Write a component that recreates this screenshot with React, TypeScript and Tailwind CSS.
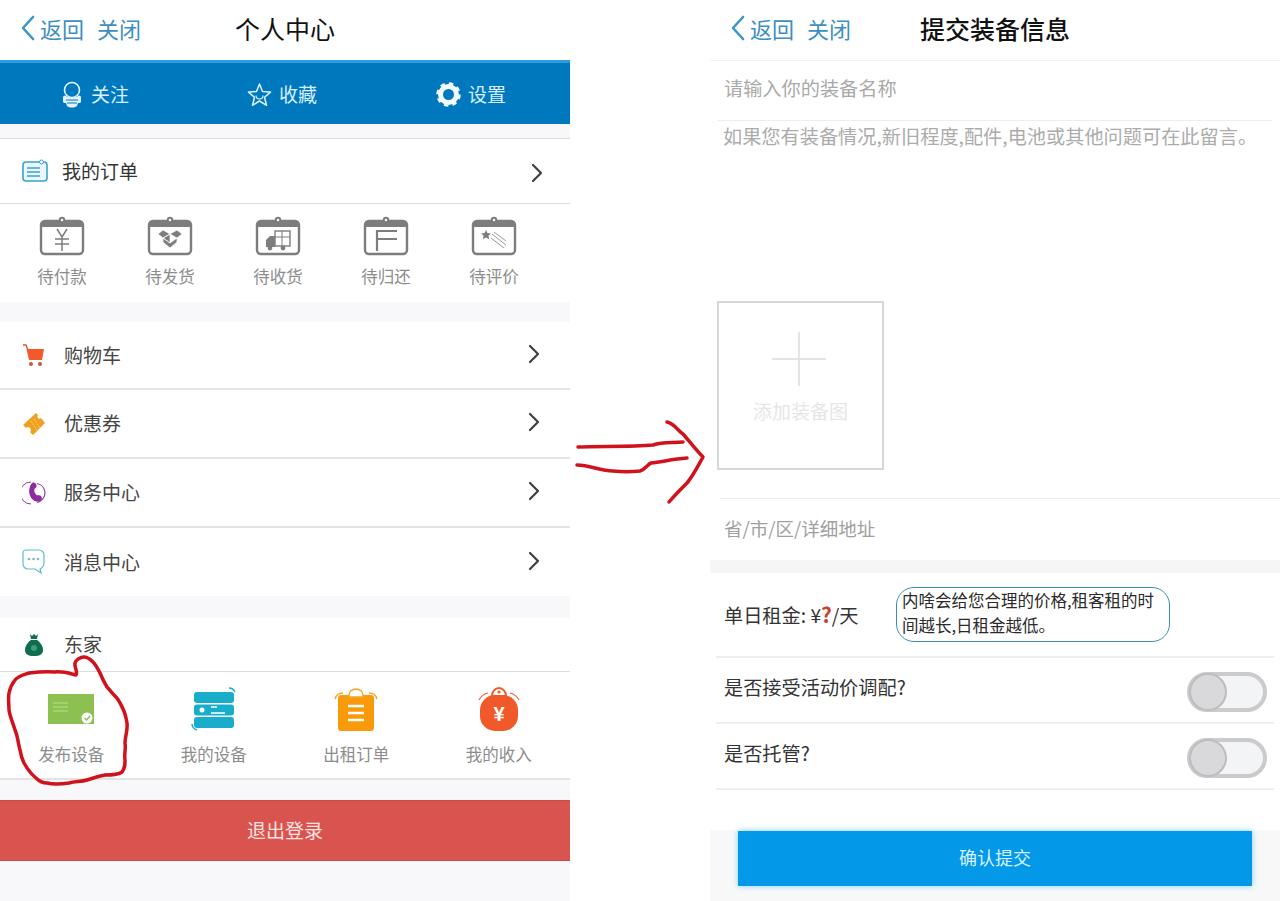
import type { ReactNode } from 'react';

function Chevron({ className = '' }: { className?: string }) {
  return (
    <svg width="14" height="20" viewBox="0 0 14 20" fill="none" className={className}>
      <path d="M3 2l8 8-8 8" stroke="#3f3f3f" strokeWidth="2.2" strokeLinecap="round" strokeLinejoin="round" />
    </svg>
  );
}

function NavBar({ title, bold }: { title: string; bold?: boolean }) {
  return (
    <header className="grid h-[60px] shrink-0 grid-cols-[1fr_auto_1fr] items-center px-[20px] pb-1">
      <div className="flex items-center text-[22px] text-[#3d8fbf]">
        <svg width="16" height="26" viewBox="0 0 16 26" fill="none" className="mr-[4px]">
          <path d="M13 2L3 13l10 11" stroke="#3d95c8" strokeWidth="2.6" strokeLinecap="round" strokeLinejoin="round" />
        </svg>
        <span>返回</span>
        <span className="ml-[13px]">关闭</span>
      </div>
      <h1 className={`text-[25px] leading-none text-[#111] ${bold ? 'font-medium' : ''}`}>{title}</h1>
      <div />
    </header>
  );
}

function OrderIcon({ children }: { children: ReactNode }) {
  return (
    <svg width="46" height="40" viewBox="0 0 46 40" fill="none">
      <rect x="2" y="5" width="42" height="33" rx="4" stroke="#7d7d7d" strokeWidth="2.4" fill="#fff" />
      <path d="M2 9a4 4 0 014-4h34a4 4 0 014 4v2H2z" fill="#7d7d7d" />
      <circle cx="23" cy="4" r="3.2" fill="#7d7d7d" />
      <circle cx="23" cy="4" r="1.2" fill="#fff" />
      {children}
    </svg>
  );
}

const orderTabs: { label: string; icon: ReactNode }[] = [
  {
    label: '待付款',
    icon: <path d="M18 13l5 8 5-8M16 23h14M16 28h14M23 21v14" stroke="#7d7d7d" strokeWidth="1.5" />,
  },
  {
    label: '待发货',
    icon: (
      <path
        d="M23 18l-7-4-5 4 5 4zM23 18l7-4 5 4-5 4-7-4-7 4 7 5zM23 27l7-5v4l-7 6-7-6v-4z"
        fill="#7d7d7d"
        stroke="#fff"
        strokeWidth="0.7"
      />
    ),
  },
  {
    label: '待收货',
    icon: (
      <>
        <rect x="20" y="15" width="15" height="15" stroke="#7d7d7d" strokeWidth="1.4" />
        <path d="M20 21h15M27 15v15" stroke="#7d7d7d" strokeWidth="1" />
        <path d="M11 31v-7l4-4h5v11z" fill="#7d7d7d" />
        <circle cx="15" cy="32" r="2.4" fill="#7d7d7d" />
        <circle cx="28" cy="32" r="2.4" fill="#7d7d7d" />
      </>
    ),
  },
  {
    label: '待归还',
    icon: <path d="M14 35V15h20M15 23h19" stroke="#7d7d7d" strokeWidth="2.2" />,
  },
  {
    label: '待评价',
    icon: (
      <>
        <path d="M15 14l1.5 3 3.500.4-2.500 2.300.7 3.500-3.200-1.700-3 1.700.6-3.500-2.400-2.300 3.400-.4z" fill="#7d7d7d" />
        <path d="M21 18l14 11M20 22l13 10M23 16l12 9" stroke="#9a9a9a" strokeWidth="1" />
      </>
    ),
  },
];

function CartIcon() {
  return (
    <svg width="24" height="24" viewBox="0 0 24 24">
      <path d="M1 2h3l2 5" stroke="#c9573a" strokeWidth="1.4" fill="none" />
      <path d="M4.500 6H22l-2 11H7z" fill="#f4592b" />
      <circle cx="9" cy="21" r="2" fill="#c9573a" />
      <circle cx="18" cy="21" r="2" fill="#c9573a" />
    </svg>
  );
}

function TicketIcon() {
  return (
    <svg width="26" height="26" viewBox="0 0 26 26">
      <path d="M15 2l2 2a2 2 0 003 3l4 5-12 12-3-3a2.500 2.500 0 00-4-4L2 14z" fill="#f0a020" />
      <path d="M10 10l6 9M13 8l6 9" stroke="#fbd27a" strokeWidth="1" strokeDasharray="2 1" />
    </svg>
  );
}

function PhoneIcon() {
  return (
    <svg width="24" height="24" viewBox="0 0 24 24" fill="none">
      <path d="M9 1a11 11 0 000 22" stroke="#8e3aa6" strokeWidth="1" />
      <path d="M15 2.500a10 10 0 018 9 10 10 0 01-8 10" stroke="#8e3aa6" strokeWidth="1.2" />
      <path
        d="M10 2c2-1 4 0 4.500 2s-1 3-2 4c-.5 2 0 4 2 6 1.500 1 3-.5 4.500 1s1 4-1 5c-4 2-9-1-10.500-7-1-4 .5-9 2.500-11z"
        fill="#8e2da0"
      />
    </svg>
  );
}

function ChatIcon() {
  return (
    <svg width="24" height="26" viewBox="0 0 24 26" fill="none">
      <path
        d="M4 1h13a5 5 0 015 5v8c0 4-2 5-4 6l1 4-6-4H6a5 5 0 01-5-5V4a3 3 0 013-3z"
        stroke="#5fbcc9"
        strokeWidth="1.2"
      />
      <circle cx="7" cy="10" r="1.3" fill="#7fb8c0" />
      <circle cx="11.500" cy="10" r="1.3" fill="#7fb8c0" />
      <circle cx="16" cy="10" r="1.3" fill="#7fb8c0" />
    </svg>
  );
}

function BagIcon() {
  return (
    <svg width="20" height="24" viewBox="0 0 20 24">
      <path d="M6 1l2 2 2-2 2 2 2-2-1 5H7z" fill="#0f6e4f" />
      <path d="M7 7h6c3 2 6 6 6 10 0 4-3 6-9 6s-9-2-9-6c0-4 3-8 6-10z" fill="#0f6e4f" />
      <circle cx="10" cy="15" r="3" fill="#3d9a7a" />
    </svg>
  );
}

const menuRows: { label: string; icon: ReactNode; rowClass: string }[] = [
  { label: '购物车', icon: <CartIcon />, rowClass: 'h-[68px] border-b-2 border-[#e4e4e4]' },
  { label: '优惠券', icon: <TicketIcon />, rowClass: 'h-[69px] border-b-2 border-[#e4e4e4]' },
  { label: '服务中心', icon: <PhoneIcon />, rowClass: 'h-[69px] border-b-2 border-[#e4e4e4]' },
  { label: '消息中心', icon: <ChatIcon />, rowClass: 'h-[68px]' },
];

const hostTabs: { label: string; icon: ReactNode }[] = [
  {
    label: '发布设备',
    icon: (
      <svg width="46" height="30" viewBox="0 0 46 30">
        <rect width="46" height="30" fill="#8cc152" />
        <path d="M5 9h15M5 13h15M5 17h15" stroke="#b9dc8f" strokeWidth="1" />
        <circle cx="39" cy="24" r="5.500" fill="#fff" />
        <path d="M36.500 24l2 2 3.500-4" stroke="#8cc152" strokeWidth="1.5" fill="none" />
      </svg>
    ),
  },
  {
    label: '我的设备',
    icon: (
      <svg width="46" height="44" viewBox="0 0 46 44" fill="none">
        <rect x="3" y="5" width="40" height="11" rx="3" fill="#18aecb" />
        <rect x="3" y="17.500" width="40" height="11" rx="3" fill="#18aecb" />
        <rect x="3" y="30" width="40" height="11" rx="3" fill="#18aecb" />
        <circle cx="11" cy="23" r="2.500" fill="#fff" />
        <path d="M20 20h6M20 26h14" stroke="#fff" strokeWidth="1.5" />
        <path d="M38 1c3 0 5 2 6 4M1 37c0 3 2 5 5 6" stroke="#18aecb" strokeWidth="1.5" />
      </svg>
    ),
  },
  {
    label: '出租订单',
    icon: (
      <svg width="44" height="46" viewBox="0 0 44 46" fill="none">
        <path d="M1 13c1-4 4-6 8-6M43 13c-1-4-4-6-8-6" stroke="#f5a623" strokeWidth="1.5" />
        <rect x="4" y="9" width="36" height="36" rx="3" fill="#f99a0a" />
        <path d="M15 9a7 6 0 0114 0v2H15z" fill="#fff" stroke="#f5a623" strokeWidth="1.5" />
        <path d="M14 20h16M14 27h16M14 34h16" stroke="#fff" strokeWidth="2.6" />
      </svg>
    ),
  },
  {
    label: '我的收入',
    icon: (
      <svg width="42" height="46" viewBox="0 0 42 46" fill="none">
        <path d="M1 14c2-4 5-6 9-7M41 14c-2-4-5-6-9-7" stroke="#f0623a" strokeWidth="1.2" />
        <rect x="2" y="9" width="38" height="36" rx="15" fill="#f1592a" />
        <path d="M14 10a7 8 0 0114 0z" fill="#fff" stroke="#f1592a" strokeWidth="2" />
        <circle cx="21" cy="6" r="1.6" fill="#f1592a" />
        <text x="21" y="35" textAnchor="middle" fontSize="20" fontWeight="700" fill="#fff" fontFamily="Liberation Sans">
          ¥
        </text>
      </svg>
    ),
  },
];

function Toggle() {
  return (
    <div className="mt-[3px] flex h-[40px] w-[80px] items-center rounded-full border-[4px] border-[#cbcbcd] bg-[#f3f4f5]">
      <div className="h-[34px] w-[34px] rounded-full bg-[#d9d9db] shadow-[0_0_0_2px_#bdbdbf]" />
    </div>
  );
}

function ProfilePanel() {
  return (
    <section className="relative flex h-[901px] w-[570px] shrink-0 flex-col bg-[#f8f8fa]">
      <div className="bg-white">
        <NavBar title="个人中心" />
      </div>
      <div className="grid h-[64px] shrink-0 grid-cols-3 border-t-[3px] border-[#2f9be0] bg-[#0078bd] pt-[2px] text-[19px] text-[#d9f0fb]">
        <div className="flex items-center justify-center gap-[8px]">
          <svg width="22" height="28" viewBox="0 0 22 28" fill="none">
            <circle cx="11" cy="9" r="7.500" stroke="#e4f4fc" strokeWidth="1.6" />
            <path d="M2 17c0-3 2-3 3-2 3 2 9 2 12 0 1-1 3-1 3 2v3c0 2-1 2-3 2l-1 3c-3 2-7 2-10 0l-1-3c-2 0-3 0-3-2z" fill="#e4f4fc" />
            <path d="M5 19h12M6 22h10" stroke="#0078bd" strokeWidth="1" />
          </svg>
          <span>关注</span>
        </div>
        <div className="flex items-center justify-center gap-[7px] pr-[6px]">
          <svg width="25" height="25" viewBox="0 0 25 25" fill="none">
            <path
              d="M12.500 2l3 7.500 8 .6-6 5.200 2 8-7-4.300-7 4.300 2-8-6-5.200 8-.6z"
              stroke="#dff2fb"
              strokeWidth="1.5"
              strokeLinejoin="round"
            />
            <path d="M9 13.500a3.500 3.500 0 007 0" stroke="#dff2fb" strokeWidth="1.2" />
          </svg>
          <span>收藏</span>
        </div>
        <div className="flex items-center justify-center gap-[7px] pr-[8px]">
          <svg width="25" height="25" viewBox="0 0 25 25" fill="none">
            <circle cx="12.500" cy="12.500" r="8" stroke="#f2fafe" strokeWidth="5" />
            <circle cx="12.500" cy="12.500" r="11" stroke="#f2fafe" strokeWidth="2.5" strokeDasharray="4.500 4.140" />
          </svg>
          <span>设置</span>
        </div>
      </div>
      <div className="mt-[14px] flex h-[66px] shrink-0 items-center border-y border-[#dcdcdc] bg-white pl-[22px] pr-[26px]">
        <svg width="26" height="24" viewBox="0 0 26 24" fill="none">
          <rect x="1" y="3" width="24" height="19" rx="3" stroke="#3aa3cc" strokeWidth="1.6" fill="#eaf6fb" />
          <path d="M5 9h13M5 13h13M5 17h13" stroke="#3aa3cc" strokeWidth="1.6" />
          <circle cx="19.500" cy="3" r="2" stroke="#3aa3cc" fill="#fff" />
        </svg>
        <span className="ml-[14px] flex-1 text-[19px] text-[#333]">我的订单</span>
        <Chevron className="mt-[3px]" />
      </div>
      <div className="grid h-[98px] shrink-0 grid-cols-5 bg-white pl-2 pr-[22px]">
        {orderTabs.map((tab) => (
          <div key={tab.label} className="flex flex-col items-center pt-[12px]">
            <OrderIcon>{tab.icon}</OrderIcon>
            <span className="mt-[8px] text-[16.5px] leading-[24px] text-[#8c8c8c]">{tab.label}</span>
          </div>
        ))}
      </div>
      <ul className="mt-[20px] bg-white">
        {menuRows.map((row) => (
          <li key={row.label} className={`flex items-center pl-[21px] pr-[29px] ${row.rowClass}`}>
            <span className="flex w-[26px] justify-center">{row.icon}</span>
            <span className="ml-[17px] flex-1 text-[19px] text-[#444]">{row.label}</span>
            <Chevron className="mb-[3px]" />
          </li>
        ))}
      </ul>
      <div className="mt-[22px] flex h-[54px] shrink-0 items-center border-b border-[#dcdcdc] bg-white pl-[24px]">
        <BagIcon />
        <span className="ml-[20px] text-[19px] text-[#444]">东家</span>
      </div>
      <div className="grid h-[108px] shrink-0 grid-cols-4 border-b-2 border-[#e4e4e4] bg-white">
        {hostTabs.map((tab) => (
          <div key={tab.label} className="flex flex-col items-center">
            <div className="flex h-[71px] items-center pt-[2px]">{tab.icon}</div>
            <span className="text-[16.5px] leading-[22px] text-[#8c8c8c]">{tab.label}</span>
          </div>
        ))}
      </div>
      <button
        type="button"
        className="mt-[20px] h-[61px] shrink-0 border-y border-[#c94a46] bg-[#d9534f] text-[19px] text-[#fbe3e1]"
      >
        退出登录
      </button>
      {/* red pen mark drawn over the 发布设备 tab */}
      <svg width="140" height="135" viewBox="0 655 140 135" fill="none" className="absolute left-0 top-[655px]">
        <path
          d="M76 675C68 673 62 671 55 672C46 671 37 672 29 673C23 675 18 676 15 680C11 685 10 688 9 693C8 699 9 705 9 710C10 717 13 723 15 730C18 737 18 743 20 750C21 756 22 759 24 763C28 770 31 774 36 778C39 781 43 783 47 783C55 785 62 784 69 783C75 781 81 782 87 780C93 778 99 776 105 775C112 775 118 775 122 772C125 768 125 765 125 760C124 754 126 749 125 743C125 736 128 730 127 723C126 717 125 712 122 707C120 703 119 700 116 697C112 693 110 690 107 687C104 682 102 678 100 673C98 669 96 665 93 662C90 659 87 657 84 657C80 657 76 660 75 663C74 667 78 671 76 675Z"
          stroke="#d0121c"
          strokeWidth="3.5"
          strokeLinejoin="round"
        />
      </svg>
    </section>
  );
}

function ArrowColumn() {
  return (
    <div className="w-[140px] shrink-0 bg-white pt-[415px]">
      <svg width="140" height="95" viewBox="570 415 140 95" fill="none">
        <path
          d="M578 447C600 446 630 447 653 445C662 442 672 443 683 442M577 465C590 465 600 471 613 471C622 472 632 472 640 471C646 469 648 464 651 463C662 462 672 459 687 458M667 422C675 424 677 430 683 434C690 442 696 450 703 457C698 466 693 476 687 483C680 490 674 496 669 502"
          stroke="#d0121c"
          strokeWidth="3.5"
          strokeLinecap="round"
          strokeLinejoin="round"
        />
      </svg>
    </div>
  );
}

function EquipmentPanel() {
  return (
    <section className="flex h-[901px] w-[570px] shrink-0 flex-col bg-white text-[19.2px]">
      <div className="border-b border-[#f2f2f2]">
        <NavBar title="提交装备信息" bold />
      </div>
      <div className="mx-[8px] flex h-[60px] shrink-0 items-center border-b border-[#eeeeee] pb-1 pl-[6px] text-[#a9a9a9]">
        请输入你的装备名称
      </div>
      <p className="h-[180px] shrink-0 pl-[13px] leading-[30px] whitespace-nowrap text-[#ababab]">
        如果您有装备情况,新旧程度,配件,电池或其他问题可在此留言。
      </p>
      <div className="ml-[7px] flex h-[169px] w-[167px] shrink-0 flex-col items-center border-2 border-[#d6d6d6] pt-[29px]">
        <svg width="54" height="54" viewBox="0 0 54 54" fill="none" className="mr-[3px]">
          <path d="M27 0v54M0 27h54" stroke="#dcdcdc" strokeWidth="1.5" />
        </svg>
        <span className="mt-[11px] text-[19px] text-[#e6e6e6]">添加装备图</span>
      </div>
      <div className="ml-[10px] mt-[28px] flex h-[62px] shrink-0 items-center border-t border-[#eeeeee] pb-[2px] pl-[4px] text-[18.5px] text-[#a0a0a0]">
        省/市/区/详细地址
      </div>
      <div className="h-[13px] shrink-0 bg-[#f6f6f6]" />
      <div className="mx-[6px] flex h-[85px] shrink-0 items-center border-b-2 border-[#eeeeee] pl-[8px]">
        <span className="w-[172px] text-[#333]">
          单日租金: ¥<span className="text-[21px] font-bold text-[#c8402f]">?</span>/天
        </span>
        <div className="h-[55px] w-[274px] rounded-[18px] border-[1.5px] border-[#3a8fb0] pl-[5px] text-[16.5px] leading-[25px] text-[#2a2a2a]">
          内啥会给您合理的价格,租客租的时间越长,日租金越低。
        </div>
      </div>
      {['是否接受活动价调配?', '是否托管?'].map((label) => (
        <div
          key={label}
          className="mx-[6px] flex h-[66px] shrink-0 items-center justify-between border-b-2 border-[#eeeeee] pl-[8px] pr-[7px]"
        >
          <span className="pb-[6px] text-[#333]">{label}</span>
          <Toggle />
        </div>
      ))}
      <div className="mt-[40px] flex flex-1 justify-center bg-[#f8f8f8]">
        <button
          type="button"
          className="mt-[1px] h-[55px] w-[514px] bg-[#0398e8] pb-[2px] text-[18px] text-[#d7f2ff] shadow-[0_0_6px_#7fd0ff]"
        >
          确认提交
        </button>
      </div>
    </section>
  );
}

export default function App() {
  return (
    <div className='flex h-[901px] w-[1280px] overflow-hidden bg-white font-["Noto_Sans_CJK_SC","Noto_Sans",sans-serif]'>
      <ProfilePanel />
      <ArrowColumn />
      <EquipmentPanel />
    </div>
  );
}
